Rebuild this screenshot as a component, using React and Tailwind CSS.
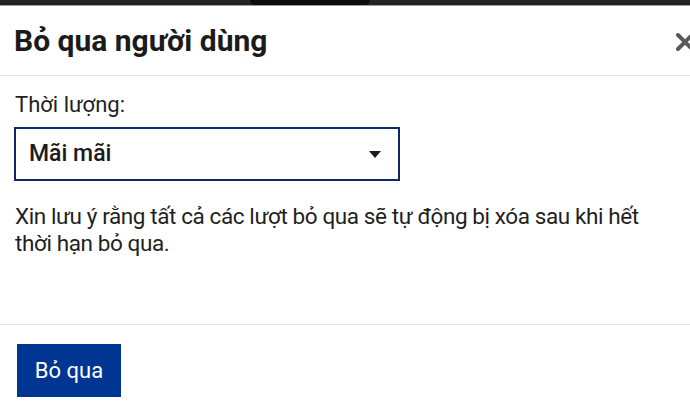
export default function App() {
  return (
    <div className="w-[690px] h-[418px] bg-white overflow-hidden flex flex-col" style={{ fontFamily: "Roboto, 'Noto Sans', sans-serif" }}>
      <div className="h-[5px] bg-[#232323] flex justify-center shrink-0">
        <div className="w-[120px] h-[5px] bg-[#0d0b0b] rounded-b-[6px] ml-[-70px]"></div>
      </div>
      <div className="h-px bg-[#9a9a9a] shrink-0"></div>
      <div className="flex items-center justify-between h-[70px] pl-[14px] shrink-0 border-b border-[#e6e6e6]">
        <h1 className="text-[30px] font-bold text-[#1b1b1b] leading-[36px]">Bỏ qua người dùng</h1>
        <svg width="22" height="22" viewBox="0 0 22 22" className="mr-[-6px] mt-[2px]">
          <path d="M4 4 L18 18 M18 4 L4 18" stroke="#5a5a5a" strokeWidth="4" strokeLinecap="round" />
        </svg>
      </div>
      <div className="flex flex-col px-[15px] pt-[15px] flex-1">
        <div className="text-[22px] text-[#1f1f1f] leading-[28px]">Thời lượng:</div>
        <div className="mt-[8px] w-[386px] h-[54px] border-2 border-[#0d2a66] flex items-center justify-between pl-[13px] pr-[17px] ml-[-1px]">
          <span className="text-[23px] font-medium text-[#1b1b1b]">Mãi mãi</span>
          <svg width="12" height="7" viewBox="0 0 12 7"><path d="M0 0 L12 0 L6 7 Z" fill="#1b1b1b" /></svg>
        </div>
        <p className="mt-[22px] text-[22.5px] leading-[27px] tracking-[-0.4px] text-[#1f1f1f]">
          Xin lưu ý rằng tất cả các lượt bỏ qua sẽ tự động bị xóa sau khi hết thời hạn bỏ qua.
        </p>
      </div>
      <div className="border-t border-[#e6e6e6] h-[94px] shrink-0 pl-[17px] pt-[19px]">
        <button className="w-[104px] h-[53px] bg-[#003592] text-white text-[22px] flex items-center justify-center">Bỏ qua</button>
      </div>
    </div>
  );
}
